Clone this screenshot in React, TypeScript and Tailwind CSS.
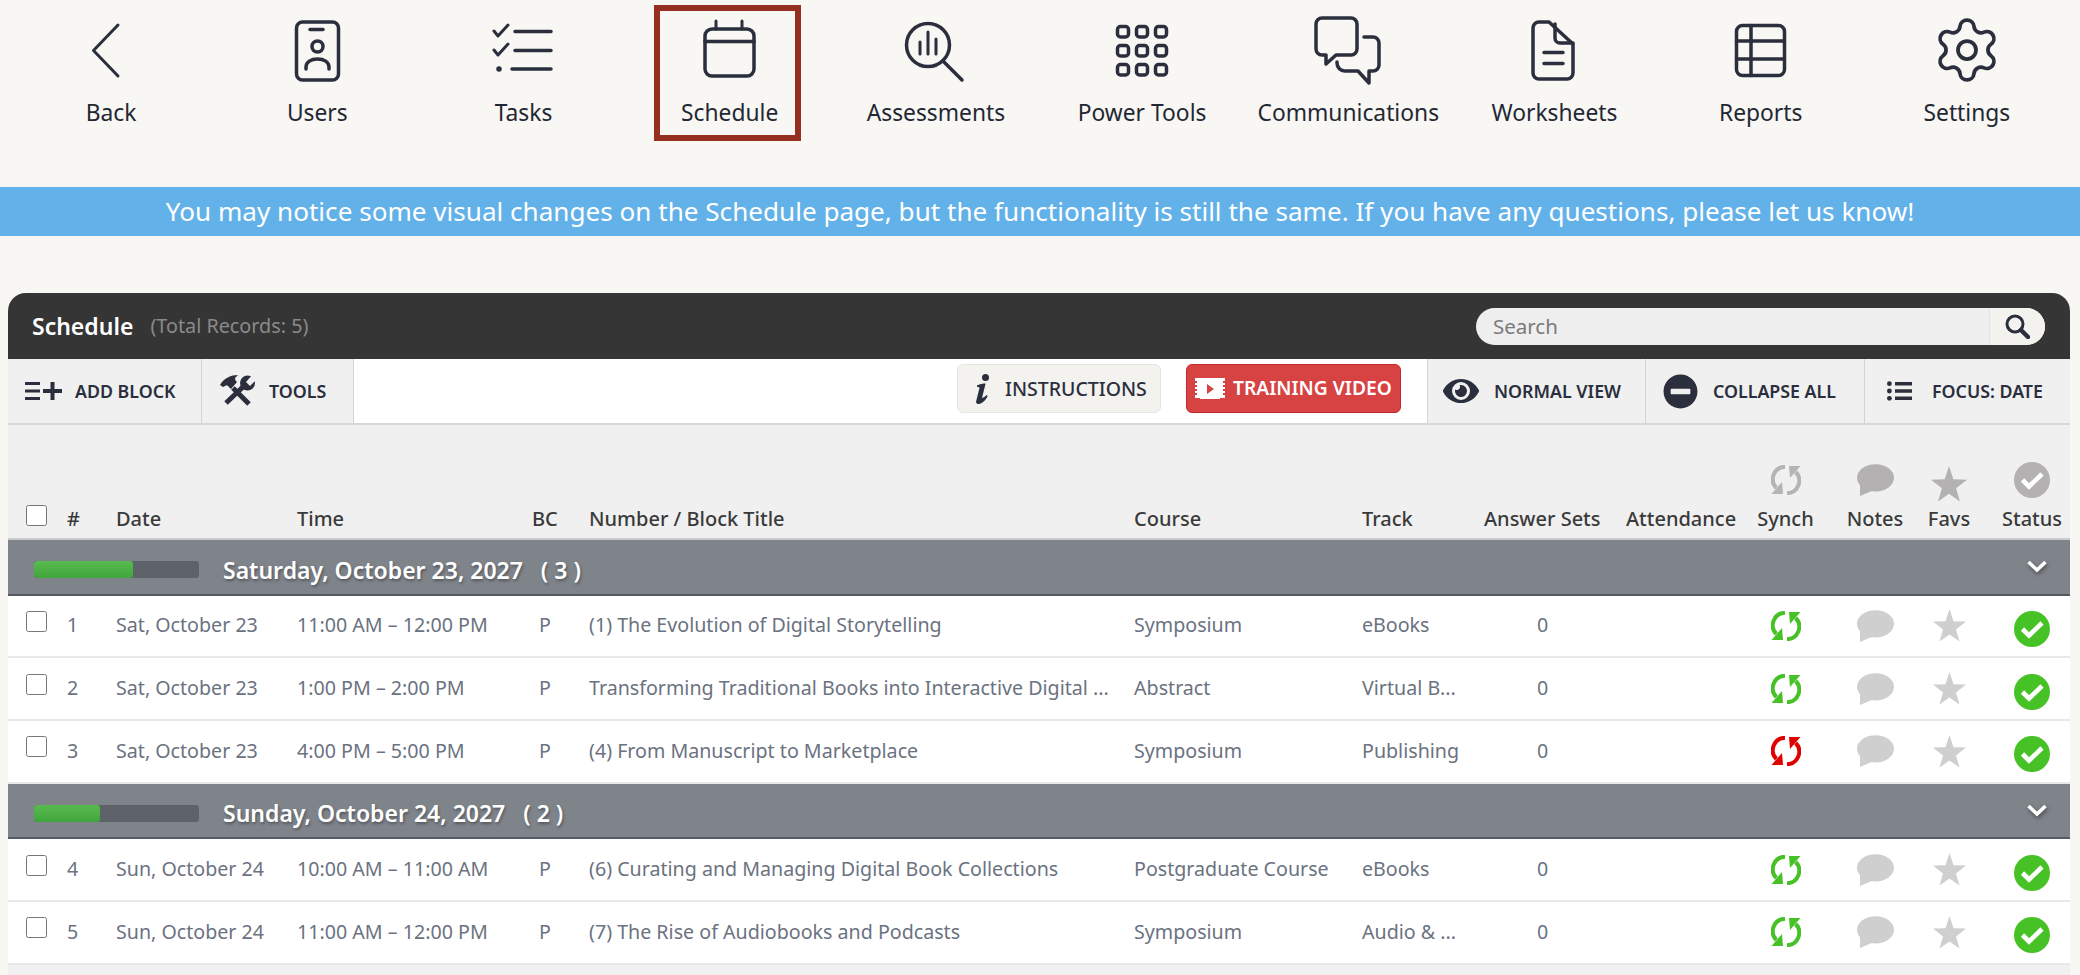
import React from "react";
import { Settings } from "lucide-react";
import { FaEye, FaMinusCircle } from "react-icons/fa";

const NAVY = "#2a2e3d";
const rowGrid = "grid grid-cols-[59px_49px_181px_235px_57px_545px_228px_122px_142px_119px_81px_98px_50px_95px]";

function NavSvg({ c, children }: { c: number; children: React.ReactNode }) {
  return (
    <svg width="90" height="80" viewBox={`${c - 45} 12 90 80`} fill="none" stroke={NAVY} strokeWidth="3.5" strokeLinecap="round" strokeLinejoin="round" className="shrink-0">
      {children}
    </svg>
  );
}

const navItems: { label: string; c: number; active?: boolean; icon: React.ReactNode }[] = [
  { label: "Back", c: 111, icon: <path d="M118 26 L93.5 51.5 L118 77" strokeWidth="3" /> },
  {
    label: "Users", c: 317, icon: (
      <>
        <rect x="296.5" y="23" width="42" height="58" rx="6" />
        <path d="M310 30.5h13" />
        <circle cx="317.5" cy="47.5" r="5.5" />
        <path d="M306 70v-2c0-5 5-8 11.5-8s11.5 3 11.5 8v2" />
      </>
    )
  },
  {
    label: "Tasks", c: 524, icon: (
      <>
        <path d="M516 32.5h36M516 51.5h36M513 70h39" />
        <path d="M495 32l4 5 10-11M495 51l4 5 10-11" strokeWidth="3" />
        <circle cx="500" cy="70" r="2" fill={NAVY} strokeWidth="1.5" />
      </>
    )
  },
  {
    label: "Schedule", c: 730, active: true, icon: (
      <>
        <rect x="705" y="30" width="49" height="47" rx="7" />
        <path d="M705 42.5h49" />
        <path d="M716 22v8M742 22v8" strokeWidth="3" />
      </>
    )
  },
  {
    label: "Assessments", c: 938, icon: (
      <>
        <circle cx="930" cy="46" r="21.5" />
        <path d="M946 63 L964 81" />
        <path d="M922 43v12M930 33v22M938 40v15" strokeWidth="3" />
      </>
    )
  },
  {
    label: "Power Tools", c: 1142, icon: (
      <>
        {[27.5, 46.5, 65.5].map((y) =>
          [1117.5, 1136.5, 1155.5].map((x) => <rect key={`${x}${y}`} x={x} y={y} width="11" height="10.5" rx="3" />)
        )}
      </>
    )
  },
  {
    label: "Communications", c: 1349, icon: (
      <>
        <path d="M1323 19h29a6 6 0 0 1 6 6v25a6 6 0 0 1-6 6h-15l-10 9v-9h-4a6 6 0 0 1-6-6V25a6 6 0 0 1 6-6z" />
        <path d="M1365 38h9a6 6 0 0 1 6 6v22a6 6 0 0 1-6 6h-4v12l-11-12h-13a8 8 0 0 1-8-8v-1" />
      </>
    )
  },
  {
    label: "Worksheets", c: 1555, icon: (
      <>
        <path d="M1540 23h10l24 22v29a6 6 0 0 1-6 6h-28a6 6 0 0 1-6-6V29a6 6 0 0 1 6-6z" />
        <path d="M1556 25v14a5 5 0 0 0 5 5h13" />
        <path d="M1545 53.5h19M1545 64.5h19" />
      </>
    )
  },
  {
    label: "Reports", c: 1761, icon: (
      <>
        <rect x="1736.5" y="26.5" width="48" height="50" rx="6" />
        <path d="M1736.5 42h48M1736.5 60h48M1751 26.5v50" />
      </>
    )
  },
  {
    label: "Settings", c: 1967, icon: null
  }
];

function Nav() {
  return (
    <div className="h-[187px] grid grid-cols-10 pl-[8px] pr-[10px] shrink-0">
      {navItems.map((n) => (
        <div key={n.label} className="flex justify-center">
          <div className={`mt-[5px] w-[147px] h-[136px] border-[6px] flex flex-col items-center ${n.active ? "border-[#952f1f] mr-[4px] pl-[4px]" : "border-transparent"}`}>
            {n.label === "Settings" ? (
              <div className="w-[90px] h-[80px] flex items-center justify-center shrink-0 pb-[2px]">
                <Settings size={72} strokeWidth={1.25} color={NAVY} />
              </div>
            ) : (
              <NavSvg c={n.c}>{n.icon}</NavSvg>
            )}
            <div className="h-[44px] leading-[44px] text-[22.8px] text-[#232733] whitespace-nowrap">{n.label}</div>
          </div>
        </div>
      ))}
    </div>
  );
}

function SyncIcon({ color }: { color: string }) {
  const arm = (
    <>
      <path d="M14 1.800A12.500 12.500 0 0 0 5.300 23" fill="none" stroke={color} strokeWidth="4" />
      <polygon points="0.5,29 12,29 11,17" fill={color} />
    </>
  );
  return (
    <svg width="30" height="30" viewBox="0 0 30 30" className="shrink-0">
      {arm}
      <g transform="rotate(180 15 15)">{arm}</g>
    </svg>
  );
}

function Bubble({ color }: { color: string }) {
  return (
    <svg width="37" height="32" viewBox="0 0 37 32" className="shrink-0">
      <ellipse cx="18.5" cy="13.8" rx="18.5" ry="13.6" fill={color} />
      <polygon points="3,20 3,32 17,26" fill={color} />
    </svg>
  );
}

function Star({ color, size = 33 }: { color: string; size?: number }) {
  return (
    <svg width={size} height={size} viewBox="0 0 33 33" className="shrink-0">
      <polygon points="16.5,0 20.5,12.2 33,12.5 23,20.5 26.5,32.5 16.5,25.5 6.5,32.5 10,20.5 0,12.5 12.5,12.2" fill={color} />
    </svg>
  );
}

function CheckCircle({ color }: { color: string }) {
  return (
    <svg width="36" height="36" viewBox="0 0 36 36" className="shrink-0">
      <circle cx="18" cy="18" r="18" fill={color} />
      <polyline points="8.5,18 15,24.5 28,12" fill="none" stroke="#fff" strokeWidth="4.6" />
    </svg>
  );
}

function ToolsIcon() {
  return (
    <svg width="36" height="32" viewBox="0 0 36 32" className="shrink-0">
      <path d="M13 13L29 29" stroke={NAVY} strokeWidth="5" />
      <path d="M0 10C4 3 11 0 18 0l-3 3c0 2 1 3 2 4l-6 7-3-3c-1-1-2-1-3 0l-2 1z" fill={NAVY} />
      <path d="M25 10L6 28" stroke={NAVY} strokeWidth="5" />
      <circle cx="27.5" cy="8" r="7.5" fill={NAVY} />
      <polygon points="26,7 33,-1 38,3 30,11" fill="#f0f0f0" />
    </svg>
  );
}

function ToolBtn({ w, icon, label, border = true }: { w: string; icon: React.ReactNode; label: string; border?: boolean }) {
  return (
    <div className={`${w} h-full flex items-center bg-[#f0f0f0] shrink-0 ${border ? "border-r border-[#d4d4d4]" : ""}`}>
      {icon}
      <span className="text-[17.8px] font-semibold text-[#2a2e3d] whitespace-nowrap">{label}</span>
    </div>
  );
}

function Toolbar() {
  return (
    <div className="h-[66px] flex bg-white border-b-2 border-[#d8d8d8] shrink-0">
      <ToolBtn
        w="w-[194px]"
        label="ADD BLOCK"
        icon={
          <svg width="37" height="18" viewBox="0 0 37 18" className="ml-[17px] mr-[13px] shrink-0" fill={NAVY}>
            <path d="M0 0h15v3H0zM0 7.500h15v3H0zM0 15h15v3H0zM25.500 0h4v7H37v4h-7.500v7h-4v-7H18V7h7.500z" />
          </svg>
        }
      />
      <ToolBtn w="w-[152px]" label="TOOLS" icon={<span className="ml-[18px] mr-[13px] flex"><ToolsIcon /></span>} />
      <div className="flex-1 flex items-start justify-end pt-[5px] pr-[26px] gap-[25px]">
        <div className="w-[204px] h-[49px] rounded-[6px] bg-[#f3f2ee] border border-[#e6e5e0] flex items-center pl-[17px] gap-[15px]">
          <svg width="15" height="30" viewBox="0 0 15 30" className="shrink-0" fill={NAVY}>
            <circle cx="10.5" cy="3.5" r="3.5" />
            <path d="M2 11.500c3-1.500 6-2 8.600-2L7 24c2-.5 3.500-1.700 4.500-3l1.200 1c-2 4-5 7.500-9 8-2 .2-3-1-2.400-3.500L4.500 14c-.2-1-1.300-1.200-2.500-1z" />
          </svg>
          <span className="text-[19.5px] font-medium text-[#2a2e3d] whitespace-nowrap">INSTRUCTIONS</span>
        </div>
        <div className="w-[215px] h-[49px] rounded-[6px] bg-[#d74242] border border-[#c22a2a] flex items-center pl-[8px] gap-[8px]">
          <svg width="30" height="22" viewBox="0 0 30 22" className="shrink-0">
            <path fill="#fff" d="M0 0h30v3h-2v2h2v2h-2v2h2v2h-2v2h2v2h-2v2h2v3H0v-3h2v-2H0v-2h2v-2H0V9h2V7H0V5h2V3H0z" />
            <rect x="5" y="1" width="20" height="20" fill="#fff" />
            <polygon points="12,6 19,11 12,16" fill="#d74242" />
          </svg>
          <span className="text-[19.2px] font-semibold text-white whitespace-nowrap">TRAINING VIDEO</span>
        </div>
      </div>
      <div className="flex h-full border-l border-[#d4d4d4]">
        <ToolBtn w="w-[218px]" label="NORMAL VIEW" icon={<span className="ml-[15px] mr-[15px] flex"><FaEye size={36} color={NAVY} /></span>} />
        <ToolBtn w="w-[219px]" label="COLLAPSE ALL" icon={<span className="ml-[17px] mr-[15px] flex"><FaMinusCircle size={35} color={NAVY} /></span>} />
        <ToolBtn
          w="w-[205px]"
          label="FOCUS: DATE"
          border={false}
          icon={
            <svg width="25" height="20" viewBox="0 0 25 20" className="ml-[22px] mr-[20px] shrink-0" fill={NAVY}>
              <path d="M8 1h17v3.400H8zM8 8.300h17v3.400H8zM8 15.600h17V19H8z" />
              <circle cx="2.4" cy="2.7" r="2.4" />
              <circle cx="2.4" cy="10" r="2.4" />
              <circle cx="2.4" cy="17.3" r="2.4" />
            </svg>
          }
        />
      </div>
    </div>
  );
}

const H = ({ children, c }: { children: React.ReactNode; c?: string }) => (
  <div className={`text-[20px] font-medium text-[#3a3a3a] whitespace-nowrap leading-[24px] ${c ?? ""}`}>{children}</div>
);

function TableHead() {
  return (
    <div className={`${rowGrid} h-[115px] bg-[#f0f0f0] border-b-2 border-[#c9cbcd] items-end pb-[7px] shrink-0`}>
      <div className="pl-[18px] flex mb-[5px]">
        <input type="checkbox" className="w-[21px] h-[21px] m-0" />
      </div>
      <H>#</H>
      <H>Date</H>
      <H>Time</H>
      <H>BC</H>
      <H>Number / Block Title</H>
      <H>Course</H>
      <H>Track</H>
      <H>Answer Sets</H>
      <H>Attendance</H>
      <div className="flex flex-col items-center gap-[12px]">
        <SyncIcon color="#b4b4b4" />
        <H>Synch</H>
      </div>
      <div className="flex flex-col items-center gap-[11px]">
        <Bubble color="#b3b1b1" />
        <H>Notes</H>
      </div>
      <div className="flex flex-col items-center gap-[5px]">
        <Star color="#b3b1b1" size={36} />
        <H>Favs</H>
      </div>
      <div className="flex flex-col items-center pl-[21px] gap-[9px]">
        <CheckCircle color="#b3b1b1" />
        <H>Status</H>
      </div>
    </div>
  );
}

function Group({ title, pct }: { title: string; pct: string }) {
  return (
    <div className="h-[55.500px] bg-[#7f848b] border-b-2 border-[#565b63] flex items-center pt-[6px] shrink-0 relative">
      <div className="ml-[26px] w-[165px] h-[17px] rounded-[3px] bg-[#5e6269] overflow-hidden flex">
        <div className={`${pct} h-full rounded-[3px] bg-gradient-to-b from-[#58bb4f] to-[#3fa53c]`} />
      </div>
      <div className="ml-[24px] text-[23px] font-semibold text-white whitespace-pre [text-shadow:1px_2px_3px_rgba(0,0,0,0.35)]">{title}</div>
      <svg width="22" height="14" viewBox="0 0 22 14" className="absolute right-[22px] top-[19px] drop-shadow-[1px_2px_2px_rgba(0,0,0,0.45)]">
        <polyline points="2.5,3 11,11 19.5,3" fill="none" stroke="#fff" strokeWidth="3.6" />
      </svg>
    </div>
  );
}

function Row({ r }: { r: { n: number; date: string; time: string; title: string; course: string; track: string; red?: boolean } }) {
  const cell = "text-[19.65px] text-[#6b7280] whitespace-nowrap mb-[2px]";
  return (
    <div className={`${rowGrid} h-[62.750px] bg-white border-b-2 border-[#e8e8e8] items-center shrink-0`}>
      <div className="pl-[18px] flex mb-[9px]">
        <input type="checkbox" className="w-[21px] h-[21px] m-0" />
      </div>
      <div className={cell}>{r.n}</div>
      <div className={cell}>{r.date}</div>
      <div className={cell}>{r.time}</div>
      <div className={`${cell} pl-[7px]`}>P</div>
      <div className={cell}>{r.title}</div>
      <div className={cell}>{r.course}</div>
      <div className={cell}>{r.track}</div>
      <div className={`${cell} pl-[53px]`}>0</div>
      <div />
      <div className="flex justify-center">
        <SyncIcon color={r.red ? "#e00000" : "#46c126"} />
      </div>
      <div className="flex justify-center">
        <Bubble color="#cfcfcf" />
      </div>
      <div className="flex justify-center">
        <Star color="#cfcfcf" />
      </div>
      <div className="flex justify-center pl-[21px] mt-[6px]">
        <CheckCircle color="#46c126" />
      </div>
    </div>
  );
}

const day1 = [
  { n: 1, date: "Sat, October 23", time: "11:00 AM – 12:00 PM", title: "(1) The Evolution of Digital Storytelling", course: "Symposium", track: "eBooks" },
  { n: 2, date: "Sat, October 23", time: "1:00 PM – 2:00 PM", title: "Transforming Traditional Books into Interactive Digital ...", course: "Abstract", track: "Virtual B..." },
  { n: 3, date: "Sat, October 23", time: "4:00 PM – 5:00 PM", title: "(4) From Manuscript to Marketplace", course: "Symposium", track: "Publishing", red: true }
];
const day2 = [
  { n: 4, date: "Sun, October 24", time: "10:00 AM – 11:00 AM", title: "(6) Curating and Managing Digital Book Collections", course: "Postgraduate Course", track: "eBooks" },
  { n: 5, date: "Sun, October 24", time: "11:00 AM – 12:00 PM", title: "(7) The Rise of Audiobooks and Podcasts", course: "Symposium", track: "Audio & ..." }
];

export default function App() {
  return (
    <div className="w-full h-[975px] overflow-hidden bg-[#f8f7f3] font-['Noto_Sans',sans-serif] flex flex-col">
      <Nav />
      <div className="h-[49px] bg-[#62b1e8] flex items-center justify-center text-white text-[26.1px] shrink-0">
        You may notice some visual changes on the Schedule page, but the functionality is still the same. If you have any questions, please let us know!
      </div>
      <div className="mt-[57px] mx-[8px] mr-[10px] flex-1 flex flex-col bg-[#f0f0f0] rounded-t-[18px] overflow-hidden">
        <div className="h-[66px] bg-[#353535] flex items-center pl-[24px] pr-[25px] shrink-0">
          <span className="text-[23px] font-semibold text-white">Schedule</span>
          <span className="ml-[17px] text-[19.8px] text-[#8a8a8a]">(Total Records: 5)</span>
          <div className="ml-auto w-[569px] h-[37px] rounded-full bg-[#eeeeee] flex overflow-hidden">
            <div className="flex-1 pl-[17px] text-[20.5px] text-[#7a7a7a] leading-[37px]">Search</div>
            <div className="w-[56px] bg-[#f3f2ee] border-l border-[#e4e4e4] flex items-center justify-center">
              <svg width="25" height="25" viewBox="0 0 25 25" fill="none" stroke={NAVY} className="shrink-0">
                <circle cx="10" cy="10" r="8" strokeWidth="3" />
                <path d="M16 16L23 23" strokeWidth="4.500" strokeLinecap="round" />
              </svg>
            </div>
          </div>
        </div>
        <Toolbar />
        <TableHead />
        <Group title="Saturday, October 23, 2027   ( 3 )" pct="w-[60%]" />
        {day1.map((r) => (
          <Row key={r.n} r={r} />
        ))}
        <Group title="Sunday, October 24, 2027   ( 2 )" pct="w-[40%]" />
        {day2.map((r) => (
          <Row key={r.n} r={r} />
        ))}
      </div>
    </div>
  );
}
